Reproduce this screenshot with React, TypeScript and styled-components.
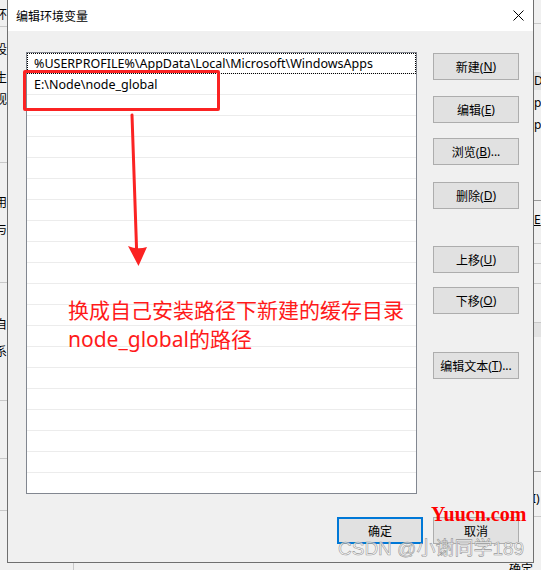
import React from 'react';
import styled, { createGlobalStyle } from 'styled-components';

const Global = createGlobalStyle`
  html, body { margin: 0; padding: 0; background: #f0f0f0; }
  body {
    width: 541px; height: 570px; overflow: hidden;
    font-family: "Noto Sans", "Noto Sans CJK SC", sans-serif;
    font-size: 12px; color: #000;
  }
  * { box-sizing: border-box; }
`;

const UI_FONT = `"Noto Sans", "Noto Sans CJK SC", sans-serif`;

const Desktop = styled.div`
  position: relative;
  width: 541px;
  height: 570px;
  display: grid;
  grid-template-columns: 7px 527px 7px;
  grid-template-rows: 563px 7px;
  background: #f0f0f0;
  overflow: hidden;
`;

const Strip = styled.div<{ $side: 'left' | 'right' }>`
  grid-row: 1;
  grid-column: ${(p) => (p.$side === 'left' ? 1 : 3)};
  display: flex;
  flex-direction: column;
  overflow: hidden;
  background: #f0f0f0;
  font-family: ${UI_FONT};
  font-size: 12px;
`;

const Frag = styled.div<{ $mt: number; $shift?: number; $u?: boolean }>`
  margin-top: ${(p) => p.$mt}px;
  height: 16px;
  line-height: 16px;
  white-space: nowrap;
  margin-left: ${(p) => p.$shift ?? -5}px;
  text-decoration: ${(p) => (p.$u ? 'underline' : 'none')};
  flex-shrink: 0;
`;

const HLine = styled.div<{ $mt: number; $c?: string }>`
  margin-top: ${(p) => p.$mt}px;
  height: 1px;
  background: ${(p) => p.$c ?? '#c8c8c8'};
  flex-shrink: 0;
`;

const Band = styled.div<{ $mt: number; $h: number }>`
  margin-top: ${(p) => p.$mt}px;
  height: ${(p) => p.$h}px;
  line-height: ${(p) => p.$h}px;
  background: #e2e2e2;
  white-space: nowrap;
  flex-shrink: 0;
`;

const BottomStrip = styled.div`
  grid-row: 2;
  grid-column: 1 / -1;
  display: flex;
  background: #f0f0f0;
  overflow: hidden;
  font-family: ${UI_FONT};
  font-size: 12px;
`;

const BottomCell = styled.div<{ $w: number }>`
  width: ${(p) => p.$w}px;
  flex-shrink: 0;
  border-right: 1px solid #c8c8c8;
`;

const BottomText = styled.div`
  margin-left: auto;
  margin-right: 8px;
  line-height: 16px;
  margin-top: -1px;
`;

const Dialog = styled.div`
  grid-row: 1;
  grid-column: 2;
  display: flex;
  flex-direction: column;
  border: 1px solid #6f6f6f;
  border-top: none;
  background: #f0f0f0;
  font-family: ${UI_FONT};
  font-size: 12px;
`;

const TitleBar = styled.div`
  height: 31px;
  background: #fff;
  display: flex;
  align-items: center;
  padding-left: 8px;
`;

const Title = styled.span`
  font-size: 12px;
  color: #000;
`;

const CloseBtn = styled.div`
  margin-left: auto;
  width: 30px;
  height: 31px;
  display: flex;
  align-items: center;
  justify-content: center;
`;

const Body = styled.div`
  flex: 1;
  display: flex;
  flex-direction: column;
  padding: 21px 14px 18px 18px;
`;

const MainRow = styled.div`
  display: flex;
  gap: 16px;
`;

const ListWrap = styled.div`
  position: relative;
  width: 391px;
  height: 442px;
`;

const ListBox = styled.div`
  width: 100%;
  height: 100%;
  border: 1px solid #828790;
  background: #fff;
  overflow: hidden;
`;

const Row = styled.div<{ $focus?: boolean }>`
  height: 21px;
  line-height: 20px;
  padding: 1px 0 0 7px;
  border-bottom: 1px solid #ececec;
  white-space: nowrap;
  outline: ${(p) => (p.$focus ? '1px dotted #000' : 'none')};
  outline-offset: -1px;
  font-size: 12.5px;
`;

const RedBox = styled.div`
  position: absolute;
  left: -3px;
  top: 18px;
  width: 197px;
  height: 41px;
  border: 3px solid #fb2323;
  border-radius: 2px;
  pointer-events: none;
`;

const ArrowSvg = styled.svg`
  position: absolute;
  left: 0;
  top: 0;
  pointer-events: none;
`;

const Note = styled.div`
  position: absolute;
  left: 42px;
  top: 244px;
  font-family: "Noto Sans", "Noto Sans CJK SC", sans-serif;
  font-size: 21px;
  line-height: 29px;
  color: #ff1a1a;
  white-space: nowrap;
  pointer-events: none;
`;

const SideButtons = styled.div`
  display: flex;
  flex-direction: column;
  width: 86px;
`;

const Btn = styled.div<{ $mt?: number; $primary?: boolean }>`
  margin-top: ${(p) => p.$mt ?? 0}px;
  width: 86px;
  height: 27px;
  display: flex;
  align-items: center;
  justify-content: center;
  background: #e1e1e1;
  border: ${(p) => (p.$primary ? '2px solid #0078d7' : '1px solid #adadad')};
  font-size: 12px;
  color: #000;
  white-space: nowrap;
  flex-shrink: 0;
`;

const U = styled.span`
  text-decoration: underline;
`;

const Footer = styled.div`
  margin-top: 23px;
  display: flex;
  justify-content: flex-end;
  gap: 10px;
`;

const WatermarkSite = styled.div`
  position: absolute;
  left: 431px;
  top: 502px;
  font-family: "Liberation Serif", serif;
  font-weight: bold;
  font-size: 20px;
  line-height: 24px;
  color: #ff0000;
  pointer-events: none;
`;

const WatermarkAuthor = styled.div`
  position: absolute;
  left: 338px;
  top: 537px;
  font-family: "Liberation Sans", "Noto Sans CJK SC", sans-serif;
  font-size: 19px;
  line-height: 24px;
  color: rgba(255, 255, 255, 0.8);
  -webkit-text-stroke: 0.6px rgba(140, 140, 140, 0.9);
  white-space: nowrap;
  pointer-events: none;
`;

const rows = Array.from({ length: 21 }, (_, i) => i);

const sideButtons: { label: string; key: string; tail?: string; mt: number }[] = [
  { label: '新建', key: 'N', mt: 1 },
  { label: '编辑', key: 'E', mt: 16 },
  { label: '浏览', key: 'B', tail: '...', mt: 15 },
  { label: '删除', key: 'D', mt: 17 },
  { label: '上移', key: 'U', mt: 37 },
  { label: '下移', key: 'O', mt: 14 },
  { label: '编辑文本', key: 'T', tail: '...', mt: 38 },
];

export default function App() {
  return (
    <>
      <Global />
      <Desktop>
        <Strip $side="left">
          <Frag $mt={7}>环</Frag>
          <HLine $mt={3} />
          <Frag $mt={15}>设</Frag>
          <Frag $mt={12}>生</Frag>
          <Frag $mt={6}>视</Frag>
          <HLine $mt={54} />
          <Frag $mt={32}>用</Frag>
          <Frag $mt={11}>与</Frag>
          <HLine $mt={44} />
          <Frag $mt={34}>自</Frag>
          <Frag $mt={11}>系</Frag>
          <HLine $mt={40} />
          <HLine $mt={57} />
          <HLine $mt={51} />
        </Strip>

        <Dialog>
          <TitleBar>
            <Title>编辑环境变量</Title>
            <CloseBtn>
              <svg width="11" height="11" viewBox="0 0 11 11">
                <path d="M0.5 0.5 L10.5 10.5 M10.5 0.5 L0.5 10.5" stroke="#000" strokeWidth="1" fill="none" />
              </svg>
            </CloseBtn>
          </TitleBar>
          <Body>
            <MainRow>
              <ListWrap>
                <ListBox>
                  {rows.map((i) => (
                    <Row key={i} $focus={i === 0}>
                      {i === 0 ? '%USERPROFILE%\\AppData\\Local\\Microsoft\\WindowsApps' : i === 1 ? 'E:\\Node\\node_global' : '\u00a0'}
                    </Row>
                  ))}
                </ListBox>
                <RedBox />
                <ArrowSvg width="391" height="442" viewBox="0 0 391 442">
                  <path d="M106 63 L110.6 198" stroke="#fb2323" strokeWidth="3" fill="none" strokeLinecap="round" />
                  <path d="M102 194 Q111 198 121 195 L112.5 214 Z" fill="#fb2323" />
                </ArrowSvg>
                <Note>
                  换成自己安装路径下新建的缓存目录
                  <br />
                  node_global的路径
                </Note>
              </ListWrap>
              <SideButtons>
                {sideButtons.map((b) => (
                  <Btn key={b.key} $mt={b.mt}>
                    {b.label}(<U>{b.key}</U>){b.tail ?? ''}
                  </Btn>
                ))}
              </SideButtons>
            </MainRow>
            <Footer>
              <Btn $primary>确定</Btn>
              <Btn>取消</Btn>
            </Footer>
          </Body>
        </Dialog>

        <Strip $side="right">
          <HLine $mt={23} />
          <Band $mt={48} $h={18}>DS</Band>
          <Frag $mt={5} $shift={0}>p</Frag>
          <Frag $mt={6} $shift={0}>p</Frag>
          <HLine $mt={67} $c="#9a9a9a" />
          <Frag $mt={11} $shift={0} $u>E</Frag>
          <HLine $mt={15} />
          <HLine $mt={19} />
          <HLine $mt={19} />
          <HLine $mt={38} />
          <Band $mt={0} $h={14}>{'\u00a0'}</Band>
          <HLine $mt={134} $c="#9a9a9a" />
          <Frag $mt={19} $shift={-2}>I)</Frag>
          <HLine $mt={9} />
        </Strip>

        <BottomStrip>
          <BottomCell $w={74} />
          <BottomText>确定</BottomText>
        </BottomStrip>

        <WatermarkSite>Yuucn.com</WatermarkSite>
        <WatermarkAuthor>CSDN @小谢同学189</WatermarkAuthor>
      </Desktop>
    </>
  );
}
